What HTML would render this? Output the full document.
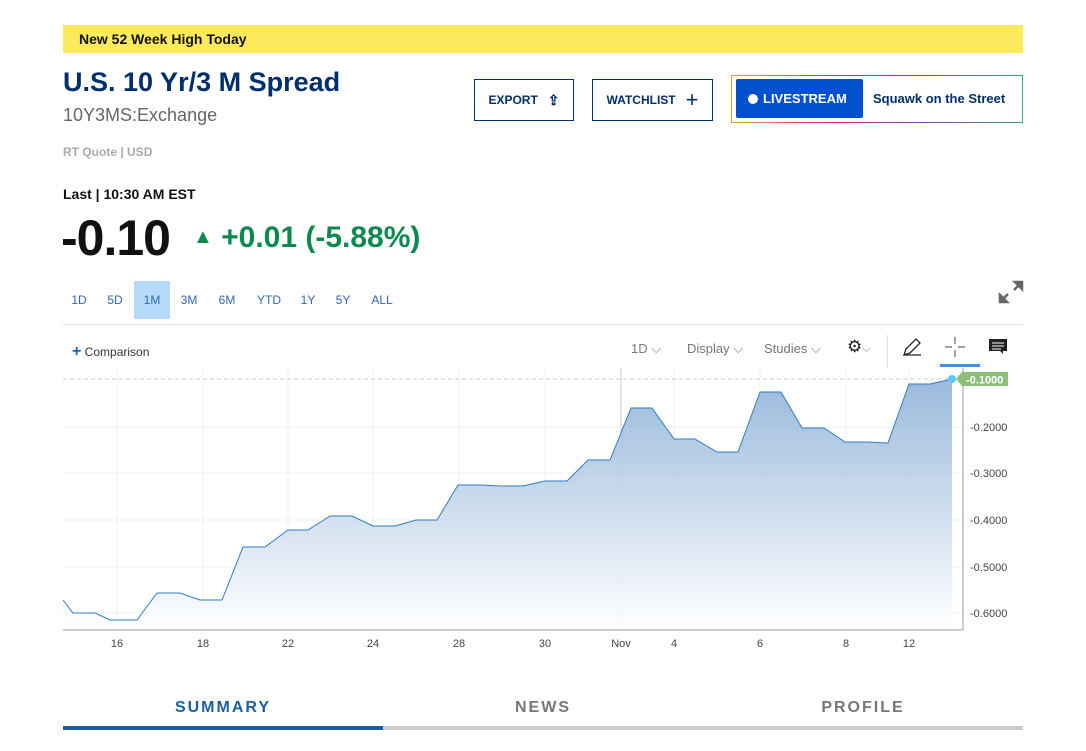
<!DOCTYPE html><html><head><style>
body{margin:0;width:1086px;height:751px;background:#fff;font-family:"Liberation Sans",sans-serif;position:relative;overflow:hidden}
.a{position:absolute}
.btn{position:absolute;border:1px solid #002f6c;box-sizing:border-box;color:#002f6c;font-size:12px;font-weight:bold;display:flex;align-items:center;justify-content:center;gap:10px}
.rng{position:absolute;top:281px;height:38px;line-height:38px;font-size:12px;color:#3168b0;text-align:center}
.tl{position:absolute;top:341px;font-size:13px;color:#777}
.ax{font-size:11px;fill:#444}
</style></head><body>
<div class="a" style="left:63px;top:25px;width:960px;height:28px;background:#fce95c;font-size:14px;font-weight:bold;line-height:28px;text-indent:16px;color:#111">New 52 Week High Today</div>
<div class="a" style="left:63px;top:67px;font-size:27px;font-weight:bold;color:#002f6c">U.S. 10 Yr/3 M Spread</div>
<div class="a" style="left:63px;top:105px;font-size:18px;color:#666">10Y3MS:Exchange</div>
<div class="a" style="left:63px;top:145px;font-size:12px;color:#aaa;font-weight:bold">RT Quote | USD</div>
<div class="btn" style="left:474px;top:79px;width:100px;height:42px">EXPORT <span style="font-size:14px">⇪</span></div>
<div class="btn" style="left:592px;top:79px;width:121px;height:42px">WATCHLIST <span style="font-size:22px;font-weight:normal">+</span></div>
<div class="a" style="left:731px;top:75px;width:292px;height:48px;box-sizing:border-box;border:1px solid;border-image:linear-gradient(90deg,#e0a030,#d03070,#8040c0,#30b070) 1;border-radius:4px"></div>
<div class="a" style="left:736px;top:79px;width:127px;height:39px;background:#0050d0;border-radius:2px;color:#fff;font-size:13px;font-weight:bold;line-height:39px;text-indent:12px"><span style="display:inline-block;width:10px;height:10px;border-radius:50%;background:#fff;text-indent:0;margin-right:5px;vertical-align:-1px"></span>LIVESTREAM</div>
<div class="a" style="left:873px;top:91px;font-size:13px;font-weight:bold;color:#002f6c">Squawk on the Street</div>
<div class="a" style="left:63px;top:186px;font-size:14px;font-weight:bold;color:#111">Last | 10:30 AM EST</div>
<div class="a" style="left:61px;top:209px;font-size:50px;font-weight:bold;color:#111;letter-spacing:-1px">-0.10</div>
<div class="a" style="left:193px;top:221px;font-size:30px;font-weight:bold;color:#0c8a4e"><span style="font-size:20px;vertical-align:4px">▲</span> +0.01 (-5.88%)</div>
<div class="rng" style="left:64px;width:30px">1D</div><div class="rng" style="left:100px;width:30px">5D</div>
<div class="rng" style="left:134px;width:36px;background:#b6dafc">1M</div><div class="rng" style="left:174px;width:30px">3M</div>
<div class="rng" style="left:212px;width:30px">6M</div><div class="rng" style="left:252px;width:34px">YTD</div>
<div class="rng" style="left:293px;width:30px">1Y</div><div class="rng" style="left:328px;width:30px">5Y</div><div class="rng" style="left:366px;width:32px">ALL</div>
<svg class="a" style="left:998px;top:280px" width="26" height="24"><path d="M2 22L10 14M24 2L16 10M2 22V15L9 22ZM24 2V9L17 2Z" stroke="#666" stroke-width="2.5" fill="#666"/></svg>
<div class="a" style="left:63px;top:324px;width:960px;height:1px;background:#ddd"></div>
<div class="a" style="left:72px;top:343px;font-size:12px;color:#333"><b style="color:#1a5fc0;font-size:16px">+</b> Comparison</div>
<div class="tl" style="left:631px">1D ⌵</div><div class="tl" style="left:687px">Display ⌵</div><div class="tl" style="left:764px">Studies ⌵</div>
<div class="tl" style="left:847px;color:#222;font-size:17px;top:337px">⚙<span style="font-size:11px;color:#777">⌵</span></div>
<div class="a" style="left:887px;top:335px;width:1px;height:32px;background:#ddd"></div>
<svg class="a" style="left:902px;top:337px" width="20" height="20"><path d="M2 18L4 12L14 2L18 6L8 16ZM2 18H19" stroke="#222" stroke-width="1.3" fill="none"/></svg>
<svg class="a" style="left:944px;top:336px" width="22" height="22"><path d="M11 1V8M11 14V21M1 11H8M14 11H21" stroke="#666" stroke-width="1.2"/></svg>
<div class="a" style="left:940px;top:364px;width:40px;height:3px;background:#3b8fe8"></div>
<svg class="a" style="left:989px;top:339px" width="18" height="16"><path d="M0 0H18V12H14V15L11 12H0Z" fill="#222"/><path d="M3 4H15M3 7H15M3 10H12" stroke="#fff"/></svg>
<svg class="a" style="left:0;top:365px" width="1086" height="300">
<defs><linearGradient id="g" x1="0" y1="0" x2="0" y2="1"><stop offset="0" stop-color="#8fb2d8"/><stop offset="1" stop-color="#fff"/></linearGradient></defs>
<g stroke="#f1f1f1">
<line x1="117" y1="3" x2="117" y2="265"/><line x1="203" y1="3" x2="203" y2="265"/><line x1="288" y1="3" x2="288" y2="265"/><line x1="373" y1="3" x2="373" y2="265"/><line x1="459" y1="3" x2="459" y2="265"/><line x1="545" y1="3" x2="545" y2="265"/><line x1="621" y1="3" x2="621" y2="265" stroke="#ccc"/><line x1="674" y1="3" x2="674" y2="265"/><line x1="760" y1="3" x2="760" y2="265"/><line x1="846" y1="3" x2="846" y2="265"/><line x1="909" y1="3" x2="909" y2="265"/>
<line x1="63" y1="62" x2="963" y2="62"/><line x1="63" y1="108" x2="963" y2="108"/><line x1="63" y1="155" x2="963" y2="155"/><line x1="63" y1="202" x2="963" y2="202"/><line x1="63" y1="248" x2="963" y2="248"/></g>
<line x1="63" y1="14" x2="963" y2="14" stroke="#ccc" stroke-dasharray="4,3"/>
<path d="M63 235L73 248L95 248L110 255L137 255L157 228L180 228L200 235L222 235L243 182L265 182L288 165L308 165L330 151L352 151L373 161L395 161L416 155L437 155L458 120L480 120L502 121L523 121L545 116L567 116L588 95L610 95L631 43L652 43L674 74L695 74L717 87L738 87L760 27L781 27L802 63L824 63L845 77L867 77L888 78L909 19L930 19L952 14V265H63Z" fill="url(#g)" opacity=".9"/>
<path d="M63 235L73 248L95 248L110 255L137 255L157 228L180 228L200 235L222 235L243 182L265 182L288 165L308 165L330 151L352 151L373 161L395 161L416 155L437 155L458 120L480 120L502 121L523 121L545 116L567 116L588 95L610 95L631 43L652 43L674 74L695 74L717 87L738 87L760 27L781 27L802 63L824 63L845 77L867 77L888 78L909 19L930 19L952 14" fill="none" stroke="#2f7dc4"/>
<line x1="63" y1="265" x2="963" y2="265" stroke="#999"/><line x1="963" y1="3" x2="963" y2="265" stroke="#999"/>
<circle cx="952" cy="14" r="4" fill="#5ac8fa"/>
<path d="M956 14L962 7H1008V21H962Z" fill="#8bc07a"/><text x="966" y="18.5" font-size="11" font-weight="bold" fill="#fff">-0.1000</text>
<g class="ax"><text x="970" y="66">-0.2000</text><text x="970" y="112">-0.3000</text><text x="970" y="159">-0.4000</text><text x="970" y="206">-0.5000</text><text x="970" y="252">-0.6000</text></g>
<g class="ax" text-anchor="middle"><text x="117" y="282">16</text><text x="203" y="282">18</text><text x="288" y="282">22</text><text x="373" y="282">24</text><text x="459" y="282">28</text><text x="545" y="282">30</text><text x="621" y="282">Nov</text><text x="674" y="282">4</text><text x="760" y="282">6</text><text x="846" y="282">8</text><text x="909" y="282">12</text></g>
</svg>
<div class="a" style="left:63px;top:699px;width:320px;text-align:center;font-size:16px;font-weight:bold;letter-spacing:2px;color:#1a5f9e">SUMMARY</div>
<div class="a" style="left:383px;top:699px;width:320px;text-align:center;font-size:16px;font-weight:bold;letter-spacing:2px;color:#777">NEWS</div>
<div class="a" style="left:703px;top:699px;width:320px;text-align:center;font-size:16px;font-weight:bold;letter-spacing:2px;color:#777">PROFILE</div>
<div class="a" style="left:63px;top:726px;width:960px;height:4px;background:#ccc"></div>
<div class="a" style="left:63px;top:726px;width:320px;height:4px;background:#1a5f9e"></div>
</body></html>
